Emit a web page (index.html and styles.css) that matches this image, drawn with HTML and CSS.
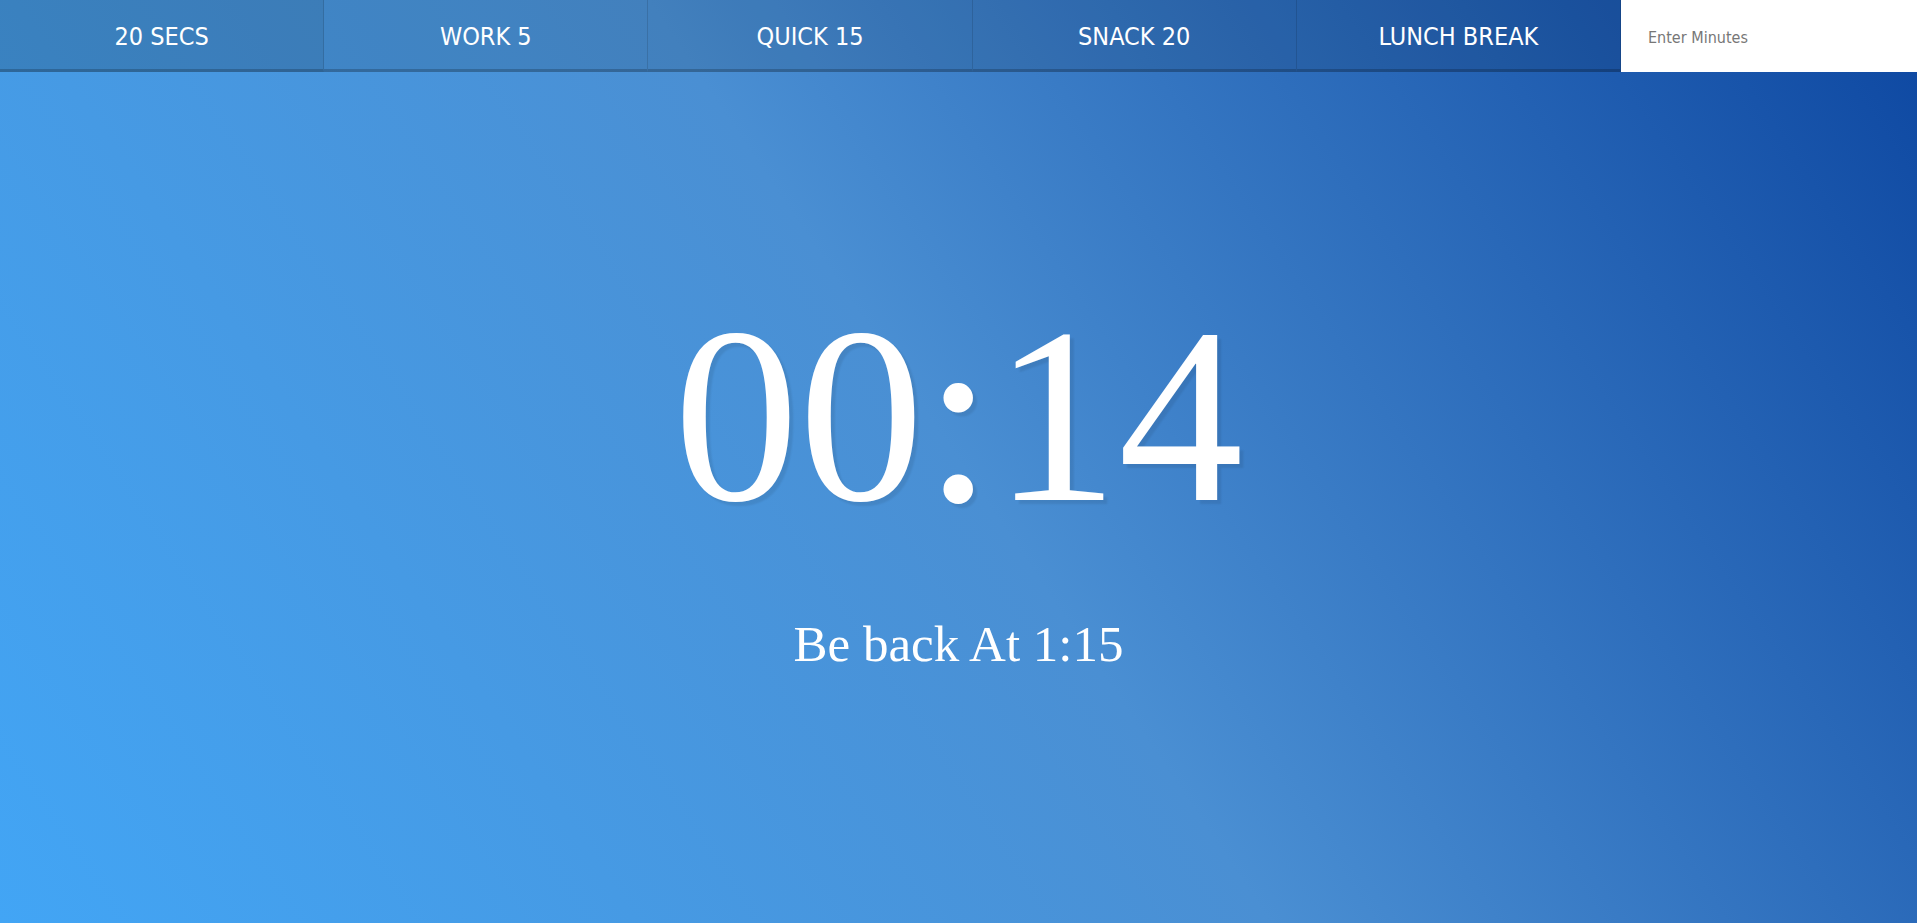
FILE: index.html
```html
<!DOCTYPE html>
<html lang="en">
<head>
<meta charset="utf-8">
<title>Break Timer</title>
<link rel="stylesheet" href="styles.css">
</head>
<body>
  <nav class="presets">
    <button class="preset preset-active" type="button">20 SECS</button>
    <button class="preset" type="button">WORK 5</button>
    <button class="preset" type="button">QUICK 15</button>
    <button class="preset" type="button">SNACK 20</button>
    <button class="preset" type="button">LUNCH BREAK</button>
    <form class="custom-form">
      <input class="custom-input" type="text" name="minutes" placeholder="Enter Minutes">
    </form>
  </nav>
  <main class="display">
    <h1 class="time-left">00:14</h1>
    <p class="end-time">Be back At 1:15</p>
  </main>
</body>
</html>
```

FILE: styles.css
```css
html, body {
  margin: 0;
  padding: 0;
  height: 100%;
}

body {
  background: linear-gradient(56deg, #42a5f5 0%, #4a8fd3 50%, #0d47a1 100%);
  background-attachment: fixed;
  display: flex;
  flex-direction: column;
  overflow: hidden;
}

.presets {
  display: grid;
  grid-template-columns: repeat(5, 1fr) 296px;
  height: 72px;
}

.preset {
  background: rgba(0, 0, 0, 0.1);
  border: 0;
  border-right: 1px solid rgba(0, 0, 0, 0.12);
  border-bottom: 3px solid rgba(0, 0, 0, 0.2);
  color: #fff;
  font-family: "DejaVu Sans Condensed", "DejaVu Sans", sans-serif;
  font-size: 25px;
  padding: 3px 0 0;
  margin: 0;
  cursor: pointer;
}

.preset-active {
  background: rgba(0, 0, 0, 0.16);
}

.custom-form {
  margin: 0;
  display: flex;
}

.custom-input {
  flex: 1;
  width: 100%;
  border: 0;
  margin: 0;
  background: #fff;
  padding: 2px 0 0 27px;
  font-family: "DejaVu Sans Condensed", "DejaVu Sans", sans-serif;
  font-size: 16px;
  color: #333;
  outline: none;
}

.custom-input::placeholder {
  color: #777;
}

.display {
  flex: 1;
  display: flex;
  flex-direction: column;
  align-items: center;
  padding-top: 219px;
  color: #fff;
  font-family: "Liberation Serif", "Times New Roman", serif;
}

.time-left {
  margin: 0;
  font-size: 250px;
  line-height: 1;
  font-weight: normal;
  text-shadow: 4px 4px 2px rgba(0, 0, 0, 0.08);
}

.end-time {
  margin: 78px 0 0;
  font-size: 51px;
  line-height: 1;
}
```
